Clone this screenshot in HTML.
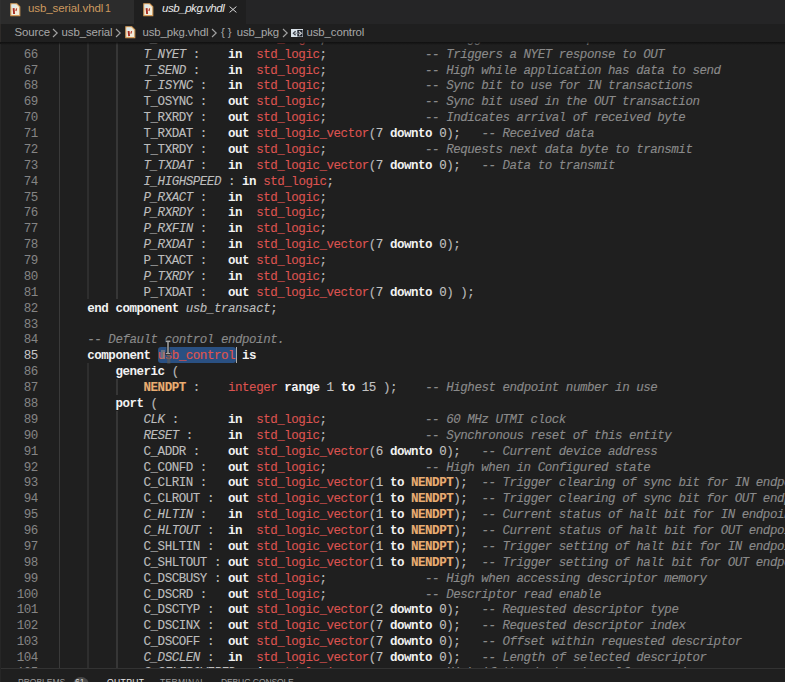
<!DOCTYPE html>
<html><head><meta charset="utf-8">
<style>
html,body{margin:0;padding:0;}
body{width:785px;height:682px;overflow:hidden;background:#1f1f1f;position:relative;font-family:"Liberation Sans",sans-serif;}
.tabs{position:absolute;left:0;top:0;width:785px;height:24px;background:#252526;}
.tab{position:absolute;top:0;height:24px;}
.t1{left:0;width:134px;background:#2c2c2c;}
.t2{left:134px;width:112px;background:#1f1f1f;}
.edge{position:absolute;left:0;top:0;width:1px;height:682px;z-index:6;background:linear-gradient(#303030 0,#303030 24px,#2e2b29 24px,#2e2b29 41.7px,#141414 41.7px,#141414 44px,#262626 44px);}
.tabtxt{position:absolute;top:-4px;height:24px;line-height:24px;font-size:11.5px;white-space:nowrap;}
.crumbs{position:absolute;left:0;top:24px;width:785px;height:17.7px;background:#1f1f1f;z-index:3;}
.cr{position:absolute;top:0;height:17.4px;line-height:17.4px;font-size:11.4px;letter-spacing:-0.1px;color:#a8a8a8;white-space:nowrap;}
.shadow{position:absolute;left:0;top:41.7px;width:785px;height:3px;background:linear-gradient(rgba(14,14,14,0.95),rgba(14,14,14,0.5) 50%,rgba(14,14,14,0));z-index:3;}
.editor{position:absolute;left:0;top:0;width:785px;height:668px;overflow:hidden;}
.ln{position:absolute;left:0;width:37.8px;text-align:right;height:15.88px;line-height:15.88px;font-family:"Liberation Mono",monospace;font-size:12.5px;letter-spacing:-0.4650px;color:#858585;white-space:pre;}
.ln.act{color:#c6c6c6;}
.cl{position:absolute;left:59.1px;height:15.88px;line-height:15.88px;font-family:"Liberation Mono",monospace;font-size:12.5px;letter-spacing:-0.4650px;color:#c0c0c0;white-space:pre;-webkit-text-stroke:0.12px currentColor;}
.cl b{color:#f2f2f2;font-weight:bold;-webkit-text-stroke:0;}
.cl i{font-style:italic;}
.ty{color:#dc5350;}
.cn{color:#e9ad72;font-weight:bold;}
.nu{color:#c2c2c2;}
.pu{color:#b8b8b8;}
.id{color:#bdbdbd;}
.cm{color:#8a8a8a;}
.sel{color:#e0544c;}
.g{position:absolute;width:1px;background:#3b3b3b;}
.panel{position:absolute;left:0;top:668px;width:785px;height:14px;background:#1f1f1f;border-top:1px solid #333333;z-index:4;}
.ph{position:absolute;top:6px;font-size:8.5px;color:#9d9d9d;white-space:nowrap;line-height:14px;}
</style></head><body>
<div class="editor">
<div class="g" style="left:59px;width:1px;background:#3a3a3a;top:29.42px;height:651.08px"></div><div class="g" style="left:87px;width:2px;background:#2e2e2e;top:29.42px;height:269.96px"></div><div class="g" style="left:87px;width:2px;background:#2e2e2e;top:362.90px;height:317.60px"></div><div class="g" style="left:116px;width:1.6px;background:#363636;top:29.42px;height:269.96px"></div><div class="g" style="left:116px;width:1.6px;background:#363636;top:378.78px;height:15.88px"></div><div class="g" style="left:116px;width:1.6px;background:#363636;top:410.54px;height:269.96px"></div>
<div style="position:absolute;left:157.9px;top:347.1px;width:77.7px;height:15.9px;background:#2a5082;border-radius:3px;"></div>
<div style="position:absolute;left:236px;top:347px;width:1.3px;height:16px;background:#aeafad;"></div>
<div class="ln" style="top:31.77px">65</div><div class="cl" style="top:31.77px">            <i class="id">T_STALL</i> <span class="pu">:</span>   <b>in</b>  <span class="ty">std_logic</span><span class="pu">;</span>              <i class="cm">-- Triggers a STALL response to IN/OUT</i></div><div class="ln" style="top:47.65px">66</div><div class="cl" style="top:47.65px">            <i class="id">T_NYET</i> <span class="pu">:</span>    <b>in</b>  <span class="ty">std_logic</span><span class="pu">;</span>              <i class="cm">-- Triggers a NYET response to OUT</i></div><div class="ln" style="top:63.53px">67</div><div class="cl" style="top:63.53px">            <i class="id">T_SEND</i> <span class="pu">:</span>    <b>in</b>  <span class="ty">std_logic</span><span class="pu">;</span>              <i class="cm">-- High while application has data to send</i></div><div class="ln" style="top:79.41px">68</div><div class="cl" style="top:79.41px">            <i class="id">T_ISYNC</i> <span class="pu">:</span>   <b>in</b>  <span class="ty">std_logic</span><span class="pu">;</span>              <i class="cm">-- Sync bit to use for IN transactions</i></div><div class="ln" style="top:95.29px">69</div><div class="cl" style="top:95.29px">            <span class="id">T_OSYNC</span> <span class="pu">:</span>   <b>out</b> <span class="ty">std_logic</span><span class="pu">;</span>              <i class="cm">-- Sync bit used in the OUT transaction</i></div><div class="ln" style="top:111.17px">70</div><div class="cl" style="top:111.17px">            <span class="id">T_RXRDY</span> <span class="pu">:</span>   <b>out</b> <span class="ty">std_logic</span><span class="pu">;</span>              <i class="cm">-- Indicates arrival of received byte</i></div><div class="ln" style="top:127.05px">71</div><div class="cl" style="top:127.05px">            <span class="id">T_RXDAT</span> <span class="pu">:</span>   <b>out</b> <span class="ty">std_logic_vector</span><span class="pu">(</span><span class="nu">7</span> <b>downto</b> <span class="nu">0</span><span class="pu">)</span><span class="pu">;</span>   <i class="cm">-- Received data</i></div><div class="ln" style="top:142.93px">72</div><div class="cl" style="top:142.93px">            <span class="id">T_TXRDY</span> <span class="pu">:</span>   <b>out</b> <span class="ty">std_logic</span><span class="pu">;</span>              <i class="cm">-- Requests next data byte to transmit</i></div><div class="ln" style="top:158.81px">73</div><div class="cl" style="top:158.81px">            <i class="id">T_TXDAT</i> <span class="pu">:</span>   <b>in</b>  <span class="ty">std_logic_vector</span><span class="pu">(</span><span class="nu">7</span> <b>downto</b> <span class="nu">0</span><span class="pu">)</span><span class="pu">;</span>   <i class="cm">-- Data to transmit</i></div><div class="ln" style="top:174.69px">74</div><div class="cl" style="top:174.69px">            <i class="id">I_HIGHSPEED</i> <span class="pu">:</span> <b>in</b> <span class="ty">std_logic</span><span class="pu">;</span></div><div class="ln" style="top:190.57px">75</div><div class="cl" style="top:190.57px">            <i class="id">P_RXACT</i> <span class="pu">:</span>   <b>in</b>  <span class="ty">std_logic</span><span class="pu">;</span></div><div class="ln" style="top:206.45px">76</div><div class="cl" style="top:206.45px">            <i class="id">P_RXRDY</i> <span class="pu">:</span>   <b>in</b>  <span class="ty">std_logic</span><span class="pu">;</span></div><div class="ln" style="top:222.33px">77</div><div class="cl" style="top:222.33px">            <i class="id">P_RXFIN</i> <span class="pu">:</span>   <b>in</b>  <span class="ty">std_logic</span><span class="pu">;</span></div><div class="ln" style="top:238.21px">78</div><div class="cl" style="top:238.21px">            <i class="id">P_RXDAT</i> <span class="pu">:</span>   <b>in</b>  <span class="ty">std_logic_vector</span><span class="pu">(</span><span class="nu">7</span> <b>downto</b> <span class="nu">0</span><span class="pu">)</span><span class="pu">;</span></div><div class="ln" style="top:254.09px">79</div><div class="cl" style="top:254.09px">            <span class="id">P_TXACT</span> <span class="pu">:</span>   <b>out</b> <span class="ty">std_logic</span><span class="pu">;</span></div><div class="ln" style="top:269.97px">80</div><div class="cl" style="top:269.97px">            <i class="id">P_TXRDY</i> <span class="pu">:</span>   <b>in</b>  <span class="ty">std_logic</span><span class="pu">;</span></div><div class="ln" style="top:285.85px">81</div><div class="cl" style="top:285.85px">            <span class="id">P_TXDAT</span> <span class="pu">:</span>   <b>out</b> <span class="ty">std_logic_vector</span><span class="pu">(</span><span class="nu">7</span> <b>downto</b> <span class="nu">0</span><span class="pu">)</span> <span class="pu">)</span><span class="pu">;</span></div><div class="ln" style="top:301.73px">82</div><div class="cl" style="top:301.73px">    <b>end</b> <b>component</b> <i class="id">usb_transact</i><span class="pu">;</span></div><div class="ln" style="top:317.61px">83</div><div class="cl" style="top:317.61px"></div><div class="ln" style="top:333.49px">84</div><div class="cl" style="top:333.49px">    <i class="cm">-- Default control endpoint.</i></div><div class="ln act" style="top:349.37px">85</div><div class="cl" style="top:349.37px">    <b>component</b> <span class="sel">usb_control</span> <b>is</b></div><div class="ln" style="top:365.25px">86</div><div class="cl" style="top:365.25px">        <b>generic</b> <span class="pu">(</span></div><div class="ln" style="top:381.13px">87</div><div class="cl" style="top:381.13px">            <span class="cn">NENDPT</span> <span class="pu">:</span>    <span class="ty">integer</span> <b>range</b> <span class="nu">1</span> <b>to</b> <span class="nu">15</span> <span class="pu">)</span><span class="pu">;</span>    <i class="cm">-- Highest endpoint number in use</i></div><div class="ln" style="top:397.01px">88</div><div class="cl" style="top:397.01px">        <b>port</b> <span class="pu">(</span></div><div class="ln" style="top:412.89px">89</div><div class="cl" style="top:412.89px">            <i class="id">CLK</i> <span class="pu">:</span>       <b>in</b>  <span class="ty">std_logic</span><span class="pu">;</span>              <i class="cm">-- 60 MHz UTMI clock</i></div><div class="ln" style="top:428.77px">90</div><div class="cl" style="top:428.77px">            <i class="id">RESET</i> <span class="pu">:</span>     <b>in</b>  <span class="ty">std_logic</span><span class="pu">;</span>              <i class="cm">-- Synchronous reset of this entity</i></div><div class="ln" style="top:444.65px">91</div><div class="cl" style="top:444.65px">            <span class="id">C_ADDR</span> <span class="pu">:</span>    <b>out</b> <span class="ty">std_logic_vector</span><span class="pu">(</span><span class="nu">6</span> <b>downto</b> <span class="nu">0</span><span class="pu">)</span><span class="pu">;</span>   <i class="cm">-- Current device address</i></div><div class="ln" style="top:460.53px">92</div><div class="cl" style="top:460.53px">            <span class="id">C_CONFD</span> <span class="pu">:</span>   <b>out</b> <span class="ty">std_logic</span><span class="pu">;</span>              <i class="cm">-- High when in Configured state</i></div><div class="ln" style="top:476.41px">93</div><div class="cl" style="top:476.41px">            <span class="id">C_CLRIN</span> <span class="pu">:</span>   <b>out</b> <span class="ty">std_logic_vector</span><span class="pu">(</span><span class="nu">1</span> <b>to</b> <span class="cn">NENDPT</span><span class="pu">)</span><span class="pu">;</span>  <i class="cm">-- Trigger clearing of sync bit for IN endpoints</i></div><div class="ln" style="top:492.29px">94</div><div class="cl" style="top:492.29px">            <span class="id">C_CLROUT</span> <span class="pu">:</span>  <b>out</b> <span class="ty">std_logic_vector</span><span class="pu">(</span><span class="nu">1</span> <b>to</b> <span class="cn">NENDPT</span><span class="pu">)</span><span class="pu">;</span>  <i class="cm">-- Trigger clearing of sync bit for OUT endpoints</i></div><div class="ln" style="top:508.17px">95</div><div class="cl" style="top:508.17px">            <i class="id">C_HLTIN</i> <span class="pu">:</span>   <b>in</b>  <span class="ty">std_logic_vector</span><span class="pu">(</span><span class="nu">1</span> <b>to</b> <span class="cn">NENDPT</span><span class="pu">)</span><span class="pu">;</span>  <i class="cm">-- Current status of halt bit for IN endpoints</i></div><div class="ln" style="top:524.05px">96</div><div class="cl" style="top:524.05px">            <i class="id">C_HLTOUT</i> <span class="pu">:</span>  <b>in</b>  <span class="ty">std_logic_vector</span><span class="pu">(</span><span class="nu">1</span> <b>to</b> <span class="cn">NENDPT</span><span class="pu">)</span><span class="pu">;</span>  <i class="cm">-- Current status of halt bit for OUT endpoints</i></div><div class="ln" style="top:539.93px">97</div><div class="cl" style="top:539.93px">            <span class="id">C_SHLTIN</span> <span class="pu">:</span>  <b>out</b> <span class="ty">std_logic_vector</span><span class="pu">(</span><span class="nu">1</span> <b>to</b> <span class="cn">NENDPT</span><span class="pu">)</span><span class="pu">;</span>  <i class="cm">-- Trigger setting of halt bit for IN endpoints</i></div><div class="ln" style="top:555.81px">98</div><div class="cl" style="top:555.81px">            <span class="id">C_SHLTOUT</span> <span class="pu">:</span> <b>out</b> <span class="ty">std_logic_vector</span><span class="pu">(</span><span class="nu">1</span> <b>to</b> <span class="cn">NENDPT</span><span class="pu">)</span><span class="pu">;</span>  <i class="cm">-- Trigger setting of halt bit for OUT endpoints</i></div><div class="ln" style="top:571.69px">99</div><div class="cl" style="top:571.69px">            <span class="id">C_DSCBUSY</span> <span class="pu">:</span> <b>out</b> <span class="ty">std_logic</span><span class="pu">;</span>              <i class="cm">-- High when accessing descriptor memory</i></div><div class="ln" style="top:587.57px">100</div><div class="cl" style="top:587.57px">            <span class="id">C_DSCRD</span> <span class="pu">:</span>   <b>out</b> <span class="ty">std_logic</span><span class="pu">;</span>              <i class="cm">-- Descriptor read enable</i></div><div class="ln" style="top:603.45px">101</div><div class="cl" style="top:603.45px">            <span class="id">C_DSCTYP</span> <span class="pu">:</span>  <b>out</b> <span class="ty">std_logic_vector</span><span class="pu">(</span><span class="nu">2</span> <b>downto</b> <span class="nu">0</span><span class="pu">)</span><span class="pu">;</span>   <i class="cm">-- Requested descriptor type</i></div><div class="ln" style="top:619.33px">102</div><div class="cl" style="top:619.33px">            <span class="id">C_DSCINX</span> <span class="pu">:</span>  <b>out</b> <span class="ty">std_logic_vector</span><span class="pu">(</span><span class="nu">7</span> <b>downto</b> <span class="nu">0</span><span class="pu">)</span><span class="pu">;</span>   <i class="cm">-- Requested descriptor index</i></div><div class="ln" style="top:635.21px">103</div><div class="cl" style="top:635.21px">            <span class="id">C_DSCOFF</span> <span class="pu">:</span>  <b>out</b> <span class="ty">std_logic_vector</span><span class="pu">(</span><span class="nu">7</span> <b>downto</b> <span class="nu">0</span><span class="pu">)</span><span class="pu">;</span>   <i class="cm">-- Offset within requested descriptor</i></div><div class="ln" style="top:651.09px">104</div><div class="cl" style="top:651.09px">            <i class="id">C_DSCLEN</i> <span class="pu">:</span>  <b>in</b>  <span class="ty">std_logic_vector</span><span class="pu">(</span><span class="nu">7</span> <b>downto</b> <span class="nu">0</span><span class="pu">)</span><span class="pu">;</span>   <i class="cm">-- Length of selected descriptor</i></div><div class="ln" style="top:665.97px">105</div><div class="cl" style="top:665.97px">            <i class="id">C_SELFPOWERED</i> <span class="pu">:</span> <b>in</b> <span class="ty">std_logic</span><span class="pu">;</span>           <i class="cm">-- High if the device is self-powered</i></div>
</div>
<div style="position:absolute;left:161.3px;top:350px;width:4.2px;height:9px;background:rgba(150,140,130,0.55);z-index:2"></div>
<svg style="position:absolute;left:163px;top:339px;z-index:2" width="10" height="26" viewBox="0 0 10 26">
<rect x="4.2" y="16" width="3.2" height="8.5" fill="#5a5a5a" opacity="0.75"/>
<path d="M2.5 2.2 H7.5 M5 2.2 V14.5 M2.5 14.5 H7.5" stroke="#111" stroke-width="2.8" fill="none"/>
<path d="M2.8 2.2 H7.2 M5 2.2 V14.5 M2.8 14.5 H7.2" stroke="#a6a6a6" stroke-width="1.5" fill="none"/>
</svg>
<div class="tabs">
  <div class="tab t1"></div>
  <div class="tab t2"></div>
  <svg style="position:absolute;left:9.5px;top:2.5px" width="11" height="14" viewBox="0 0 11 14"><path d="M0.8 0.8 H6.8 L9.8 3.8 V12.6 H0.8 Z" fill="#f2ecd9" stroke="#d39a58" stroke-width="1.1"/><rect x="1.6" y="1.6" width="4" height="3" fill="#dce9ee"/><path d="M3.6 5.2 L4.1 11" stroke="#a52a22" stroke-width="1.9" fill="none"/><path d="M6.6 5.4 L5.9 8" stroke="#b5382a" stroke-width="1.2" fill="none"/></svg>
  <div class="tabtxt" style="left:28px;color:#cd9a5f;letter-spacing:-0.1px">usb_serial.vhdl</div><div class="tabtxt" style="left:105px;color:#cd9a5f;font-size:10.5px">1</div>
  <svg style="position:absolute;left:143px;top:2.5px" width="11" height="14" viewBox="0 0 11 14"><path d="M0.8 0.8 H6.8 L9.8 3.8 V12.6 H0.8 Z" fill="#f2ecd9" stroke="#d39a58" stroke-width="1.1"/><rect x="1.6" y="1.6" width="4" height="3" fill="#dce9ee"/><path d="M3.6 5.2 L4.1 11" stroke="#a52a22" stroke-width="1.9" fill="none"/><path d="M6.6 5.4 L5.9 8" stroke="#b5382a" stroke-width="1.2" fill="none"/></svg>
  <div class="tabtxt" style="left:162px;color:#e8e8e8;font-style:italic;letter-spacing:-0.45px">usb_pkg.vhdl</div>
  <svg style="position:absolute;left:228.5px;top:6px" width="8" height="7" viewBox="0 0 8 7"><path d="M0.6 0.6 L7.4 6.4 M7.4 0.6 L0.6 6.4" stroke="#d8d8d8" stroke-width="1"/></svg>
</div>
<div class="crumbs">
  <div class="cr" style="left:14.6px">Source</div>
  <svg style="position:absolute;left:51.5px;top:4px" width="7" height="10" viewBox="0 0 7 10"><path d="M1 1 L5.2 5 L1 9" stroke="#a2a2a2" stroke-width="1.15" fill="none"/></svg>
  <div class="cr" style="left:61.6px">usb_serial</div>
  <svg style="position:absolute;left:114.5px;top:4px" width="7" height="10" viewBox="0 0 7 10"><path d="M1 1 L5.2 5 L1 9" stroke="#a2a2a2" stroke-width="1.15" fill="none"/></svg>
  <svg style="position:absolute;left:124.5px;top:2px" width="11" height="13" viewBox="0 0 11 13"><path d="M0.8 0.8 H6.8 L9.8 3.8 V11.6 H0.8 Z" fill="#f2ecd9" stroke="#d39a58" stroke-width="1.1"/><rect x="1.6" y="1.6" width="4" height="3" fill="#dce9ee"/><path d="M3.6 5 L4.1 10.2" stroke="#a52a22" stroke-width="1.9" fill="none"/><path d="M6.6 5.2 L5.9 7.6" stroke="#b5382a" stroke-width="1.2" fill="none"/></svg>
  <div class="cr" style="left:142.4px">usb_pkg.vhdl</div>
  <svg style="position:absolute;left:211.1px;top:4px" width="7" height="10" viewBox="0 0 7 10"><path d="M1 1 L5.2 5 L1 9" stroke="#a2a2a2" stroke-width="1.15" fill="none"/></svg>
  <div class="cr" style="left:221px">{ }</div>
  <div class="cr" style="left:236.7px">usb_pkg</div>
  <svg style="position:absolute;left:281.5px;top:4px" width="7" height="10" viewBox="0 0 7 10"><path d="M1 1 L5.2 5 L1 9" stroke="#a2a2a2" stroke-width="1.15" fill="none"/></svg>
  <svg style="position:absolute;left:290.7px;top:4.6px" width="12.5" height="8.5" viewBox="0 0 12.5 8.5"><rect x="0.5" y="0.5" width="11.5" height="7.5" fill="#1a1f28" stroke="#d6dde3" stroke-width="1"/><rect x="0.5" y="0.5" width="5.8" height="7.5" fill="#dce5ec"/><path d="M4.6 2.2 L2.4 4.25 L4.6 6.3" stroke="#3a4048" stroke-width="1.3" fill="none"/><path d="M8 2.2 L10.2 4.25 L8 6.3" stroke="#d8d8d8" stroke-width="1.3" fill="none"/><path d="M3 4.25 H9.6" stroke="#8a9098" stroke-width="0.9"/></svg>
  <div class="cr" style="left:306.5px">usb_control</div>
</div>
<div class="shadow"></div>
<div class="edge"></div>
<div class="panel">
  <div class="ph" style="left:18px">PROBLEMS</div>
  <div style="position:absolute;left:72.5px;top:7.8px;width:16.5px;height:16.5px;border-radius:9px;background:#4a4a4a;"></div>
  <div class="ph" style="left:75px;color:#ddd;letter-spacing:0">61</div>
  <div class="ph" style="left:107px;color:#e7e7e7;letter-spacing:0.4px">OUTPUT</div>
  <div class="ph" style="left:160px;letter-spacing:0.3px">TERMINAL</div>
  <div class="ph" style="left:221px;letter-spacing:-0.12px">DEBUG CONSOLE</div>
</div>
</body></html>
